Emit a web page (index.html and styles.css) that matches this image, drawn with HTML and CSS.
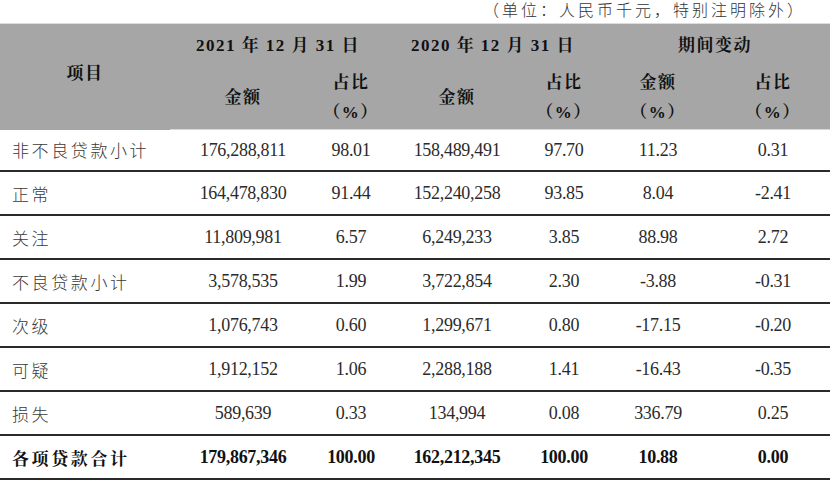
FILE: index.html
```html
<!DOCTYPE html>
<html lang="zh">
<head>
<meta charset="utf-8">
<link rel="stylesheet" href="styles.css">
</head>
<body>
<div class="unit">（单位：人民币千元，特别注明除外）</div>
<table class="tbl">
  <colgroup>
    <col class="c0"><col class="c1"><col class="c2"><col class="c3"><col class="c4"><col class="c5"><col class="c6">
  </colgroup>
  <thead>
    <tr class="h1">
      <th rowspan="2" class="item-h">项目</th>
      <th colspan="2">2021 年 12 月 31 日</th>
      <th colspan="2">2020 年 12 月 31 日</th>
      <th colspan="2">期间变动</th>
    </tr>
    <tr class="h2">
      <th>金额</th>
      <th>占比<br>（%）</th>
      <th>金额</th>
      <th>占比<br>（%）</th>
      <th>金额<br>（%）</th>
      <th>占比<br>（%）</th>
    </tr>
  </thead>
  <tbody>
    <tr class="first"><td>非不良贷款小计</td><td>176,288,811</td><td>98.01</td><td>158,489,491</td><td>97.70</td><td>11.23</td><td>0.31</td></tr>
    <tr><td>正常</td><td>164,478,830</td><td>91.44</td><td>152,240,258</td><td>93.85</td><td>8.04</td><td>-2.41</td></tr>
    <tr><td>关注</td><td>11,809,981</td><td>6.57</td><td>6,249,233</td><td>3.85</td><td>88.98</td><td>2.72</td></tr>
    <tr><td>不良贷款小计</td><td>3,578,535</td><td>1.99</td><td>3,722,854</td><td>2.30</td><td>-3.88</td><td>-0.31</td></tr>
    <tr><td>次级</td><td>1,076,743</td><td>0.60</td><td>1,299,671</td><td>0.80</td><td>-17.15</td><td>-0.20</td></tr>
    <tr><td>可疑</td><td>1,912,152</td><td>1.06</td><td>2,288,188</td><td>1.41</td><td>-16.43</td><td>-0.35</td></tr>
    <tr><td>损失</td><td>589,639</td><td>0.33</td><td>134,994</td><td>0.08</td><td>336.79</td><td>0.25</td></tr>
    <tr class="total"><td>各项贷款合计</td><td>179,867,346</td><td>100.00</td><td>162,212,345</td><td>100.00</td><td>10.88</td><td>0.00</td></tr>
  </tbody>
</table>
</body>
</html>
```
FILE: styles.css
```css
html, body {
  margin: 0;
  padding: 0;
  background: #fff;
}
body {
  width: 830px;
  font-family: "Liberation Serif", "Noto Sans CJK SC", serif;
  color: #2b2b2b;
}
.unit {
  height: 23px;
  line-height: 22px;
  text-align: right;
  padding-right: 24px;
  font-size: 16px;
  letter-spacing: 3px;
  color: #333;
  font-family: "Liberation Serif", "Noto Sans CJK SC", serif;
  font-weight: 300;
}
.tbl {
  width: 830px;
  border-collapse: collapse;
  table-layout: fixed;
}
.c0 { width: 170px; }
.c1 { width: 146px; }
.c2 { width: 70px; }
.c3 { width: 142px; }
.c4 { width: 72px; }
.c5 { width: 116px; }
.c6 { width: 114px; }
thead {
  background: #a6a6a6;
}
thead tr.h1 th {
  border-top: 1px solid #dcdcdc;
  height: 43px;
}
thead th {
  padding: 0;
  font-weight: bold;
  color: #111;
  font-size: 17px;
  text-align: center;
  vertical-align: middle;
  font-family: "Liberation Serif", "Noto Serif CJK SC", "Noto Sans CJK SC", serif;
  letter-spacing: 1.5px;
}
thead tr.h1 th { line-height: 22px; }
thead tr.h2 th {
  height: 62px;
  line-height: 30px;
  border-bottom: 1px solid #d8d8d8;
}
thead .item-h {
  vertical-align: middle;
  padding-bottom: 6px;
}
tbody td {
  padding: 0;
  height: 42px;
  font-size: 18px;
  text-align: center;
  vertical-align: middle;
  border-bottom: 2px solid #2a2a2a;
  letter-spacing: -0.3px;
}
tbody tr.first td {
  height: 40px;
}
tbody td:first-child {
  text-align: left;
  padding-left: 12px;
  font-size: 17px;
  letter-spacing: 2.6px;
  color: #3a3a3a;
  font-family: "Noto Sans CJK SC", sans-serif;
  font-weight: 300;
}
tbody tr.total td {
  font-weight: bold;
  color: #111;
}
tbody tr.total td:first-child {
  font-weight: bold;
  color: #111;
  font-family: "Noto Serif CJK SC", "Noto Sans CJK SC", serif;
}
```
